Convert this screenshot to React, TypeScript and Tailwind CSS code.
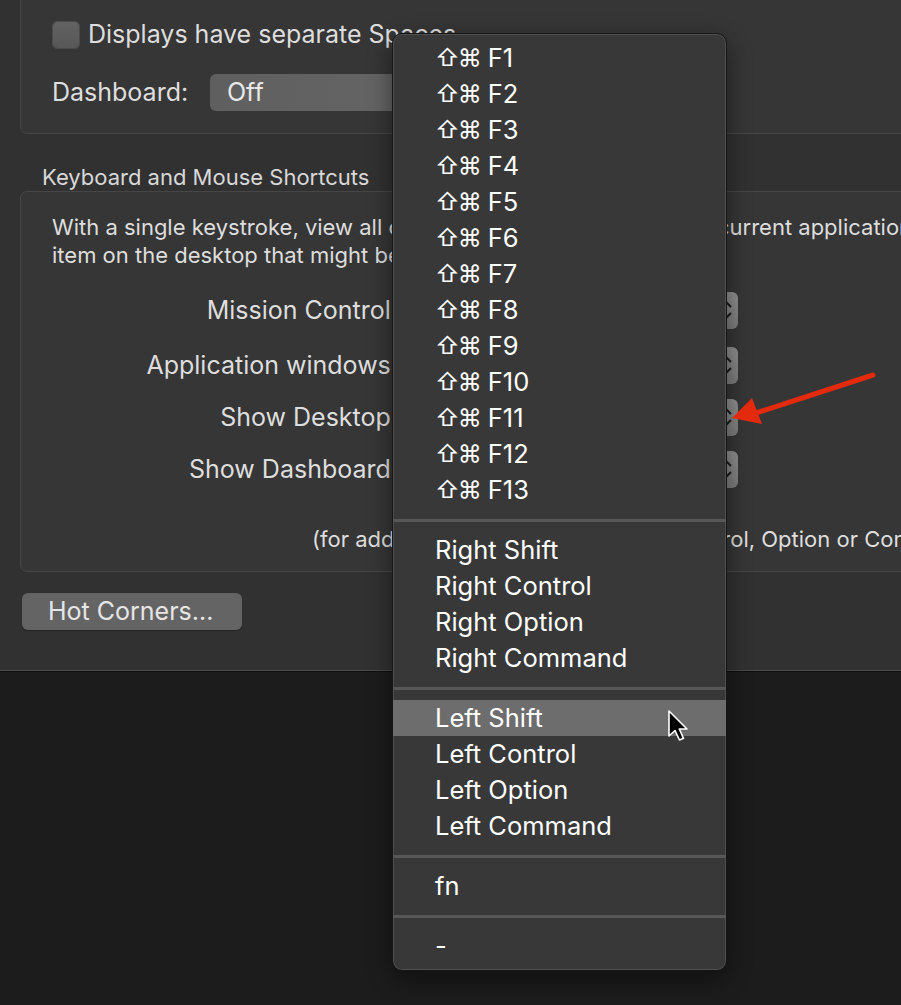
import React from 'react';

// macOS Mission Control prefs, dark mode, with the shortcut popup menu open
const SANS = "font-['Inter','DejaVu_Sans',sans-serif]";

const FKEYS = ['F1', 'F2', 'F3', 'F4', 'F5', 'F6', 'F7', 'F8', 'F9', 'F10', 'F11', 'F12', 'F13'];
const RIGHT_MODS = ['Right Shift', 'Right Control', 'Right Option', 'Right Command'];
const LEFT_MODS = ['Left Shift', 'Left Control', 'Left Option', 'Left Command'];

const SHORTCUT_ROWS = [
  { label: 'Mission Control:', mt: 'mt-[23px]' },
  { label: 'Application windows:', mt: 'mt-[18px]' },
  { label: 'Show Desktop:', mt: 'mt-[15px]' },
  { label: 'Show Dashboard:', mt: 'mt-[15px]' },
];

function Chevrons() {
  return (
    <svg viewBox="0 0 12 24" className="h-[24px] w-[12px]" fill="none" stroke="#1a1a1a" strokeWidth="2">
      <path d="M2 9 L6 5 L10 9" />
      <path d="M2 15 L6 19 L10 15" />
    </svg>
  );
}

function MenuItem({ children, active }: { children: React.ReactNode; active?: boolean }) {
  return (
    <div
      className={
        'flex h-[36px] items-center whitespace-nowrap pl-[42px] text-[25.5px] text-white ' +
        (active ? 'bg-[#6d6d6d]' : '')
      }
    >
      {children}
    </div>
  );
}

function Separator() {
  return (
    <div className="flex h-[24px] items-center">
      <div className="h-[3px] w-full bg-[#575757]" />
    </div>
  );
}

function PopupMenu() {
  return (
    <div className="absolute left-[392px] top-[33px] w-[335px] rounded-[10px] border border-[#161616] bg-[#383838] py-[6px] shadow-[inset_0_0_0_1px_#4f4f4f,0_8px_24px_rgba(0,0,0,0.45)]">
      {FKEYS.map((k) => (
        <MenuItem key={k}>
          <span className="text-[24px] tracking-[-2px]">⇧⌘</span>
          <span className="ml-[8px]">{k}</span>
        </MenuItem>
      ))}
      <Separator />
      {RIGHT_MODS.map((m) => (
        <MenuItem key={m}>{m}</MenuItem>
      ))}
      <Separator />
      {LEFT_MODS.map((m, i) => (
        <MenuItem key={m} active={i === 0}>
          {m}
        </MenuItem>
      ))}
      <Separator />
      <MenuItem>fn</MenuItem>
      <Separator />
      <MenuItem>-</MenuItem>
    </div>
  );
}

export default function App() {
  return (
    <div className={`relative h-[1005px] w-[901px] overflow-hidden bg-[#1c1c1c] ${SANS}`}>
      {/* preferences window */}
      <div className="flex h-[671px] w-[1200px] flex-col items-start border-b border-[#4b4b4b] bg-[#313131] px-[20px] text-[#dedede]">
        {/* Spaces box */}
        <div className="-mt-[21px] h-[155px] w-[1100px] shrink-0 rounded-[7px] border border-[#464646] bg-[#363636] pl-[31px] pt-[41px]">
          <div className="flex h-[28px] items-center">
            <div className="h-[28px] w-[28px] rounded-[6px] bg-gradient-to-b from-[#636363] to-[#575757] shadow-[inset_0_0_0_1px_#4a4a4a]" />
            <span className="ml-[8px] text-[25px]">Displays have separate Spaces</span>
          </div>
          <div className="mt-[25px] flex h-[37px] items-center">
            <span className="w-[158px] text-[25px]">Dashboard:</span>
            <div className="flex h-[37px] w-[480px] items-center rounded-[6px] bg-gradient-to-r from-[#5f5f5f] to-[#6c6c6c] pl-[17px] text-[25px] text-[#e8e8e8]">
              Off
            </div>
          </div>
        </div>

        <div className="mt-[31px] pl-[22px] text-[22px] leading-[24px] text-[#d8d8d8]">
          Keyboard and Mouse Shortcuts
        </div>

        {/* shortcuts box */}
        <div className="mt-[2px] h-[381px] w-[1100px] shrink-0 rounded-[7px] border border-[#464646] bg-[#363636] pl-[31px] pt-[21px]">
          <div className="whitespace-nowrap text-[22px] leading-[28px]">
            <div>
              With a single keystroke, view all open windows, windows of the current application, or hide windows to locate an
            </div>
            <div>item on the desktop that might be covered up.</div>
          </div>

          {SHORTCUT_ROWS.map((row) => (
            <div key={row.label} className={`${row.mt} flex h-[37px] items-center`}>
              <div className="w-[346px] whitespace-nowrap text-right text-[25px]">{row.label}</div>
              <div className="relative ml-[10px] h-[37px] w-[330px] rounded-[6px] bg-gradient-to-b from-[#8f8f8f] to-[#7b7b7b]">
                <div className="absolute right-[5px] top-[6px]">
                  <Chevrons />
                </div>
              </div>
            </div>
          ))}

          <div className="ml-[260px] mt-[37px] whitespace-nowrap text-[22px] leading-[28px]">
            (for additional choices press Shift, Control, Option or Command)
          </div>
        </div>

        <button className="ml-[2px] mt-[21px] flex h-[37px] w-[220px] shrink-0 items-center rounded-[6px] bg-[#646464] pl-[26px] text-[25px] text-[#e6e6e6] shadow-[0_1px_1px_rgba(0,0,0,0.3)]">
          Hot Corners...
        </button>
      </div>
      <div className="h-px w-full bg-[#0e0e0e]" />

      <PopupMenu />

      {/* annotation arrow */}
      <svg className="absolute left-[720px] top-[360px]" width="170" height="80" viewBox="0 0 170 80">
        <line x1="153" y1="15" x2="30" y2="55" stroke="#e42a0c" strokeWidth="5" strokeLinecap="round" />
        <polygon points="12,58 32,38 42,64" fill="#e42a0c" />
      </svg>

      {/* mouse cursor */}
      <svg className="absolute left-[667px] top-[709px]" width="26" height="36" viewBox="0 0 26 36">
        <path
          d="M2 2 L2 27 L8 21.5 L12.5 31 L16.5 29.3 L12.3 20 L20 20 Z"
          fill="#000"
          stroke="#fff"
          strokeWidth="1.6"
          strokeLinejoin="round"
        />
      </svg>
    </div>
  );
}
